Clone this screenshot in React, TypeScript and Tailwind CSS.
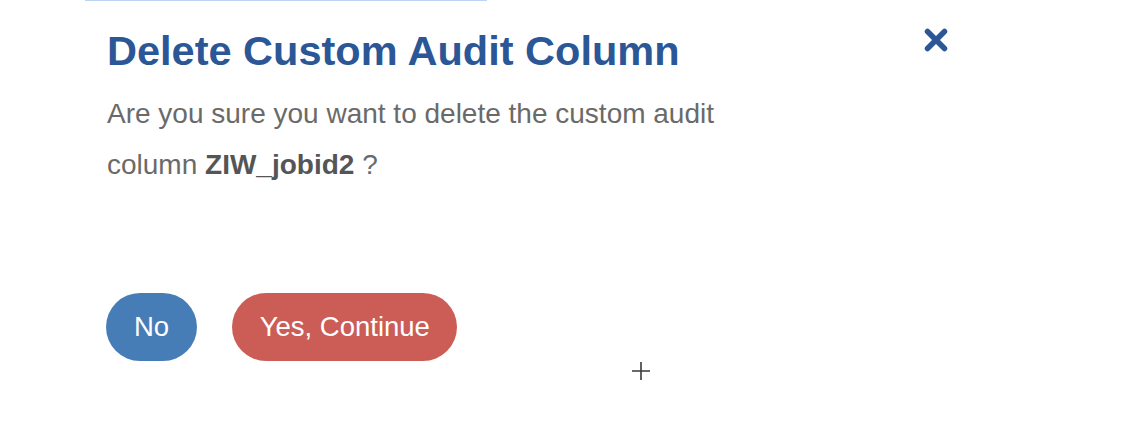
export default function App() {
  return (
    <div className="relative w-[1138px] h-[426px] bg-white font-['Liberation_Sans',Arial,sans-serif] overflow-hidden">
      <div className="ml-[85px] w-[402px] h-px bg-[#bcd4f6]" />
      <div className="pl-[107px] pr-[190px] pt-[26px]">
        <div className="flex items-start justify-between">
          <h1 className="text-[41.5px] leading-[48px] font-bold text-[#2b5797]">
            Delete Custom Audit Column
          </h1>
          <button aria-label="Close" className="mt-px text-[#2b5797]">
            <svg width="24" height="24" viewBox="0 0 24 24">
              <path
                d="M3.5 3.5 L20.5 20.5 M20.5 3.5 L3.5 20.5"
                stroke="currentColor"
                strokeWidth="5.5"
                strokeLinecap="round"
                fill="none"
              />
            </svg>
          </button>
        </div>
        <p className="mt-[13px] w-[620px] text-[28px] leading-[51px] text-[#6a6a6a]">
          Are you sure you want to delete the custom audit column{' '}
          <strong className="font-bold text-[#555555]">ZIW_jobid2</strong> ?
        </p>
        <div className="mt-[103px] -ml-px flex gap-[35px]">
          <button className="h-[68px] px-[28px] rounded-full bg-[#477db6] text-white text-[27.5px]">
            No
          </button>
          <button className="h-[68px] px-[27.5px] rounded-full bg-[#cb5d56] text-white text-[27.5px]">
            Yes, Continue
          </button>
        </div>
      </div>
      <svg
        className="absolute left-[632px] top-[362px]"
        width="18"
        height="18"
        viewBox="0 0 18 18"
      >
        <path d="M9 0 V18 M0 9 H18" stroke="#3a3a3a" strokeWidth="1.6" fill="none" />
      </svg>
    </div>
  );
}
